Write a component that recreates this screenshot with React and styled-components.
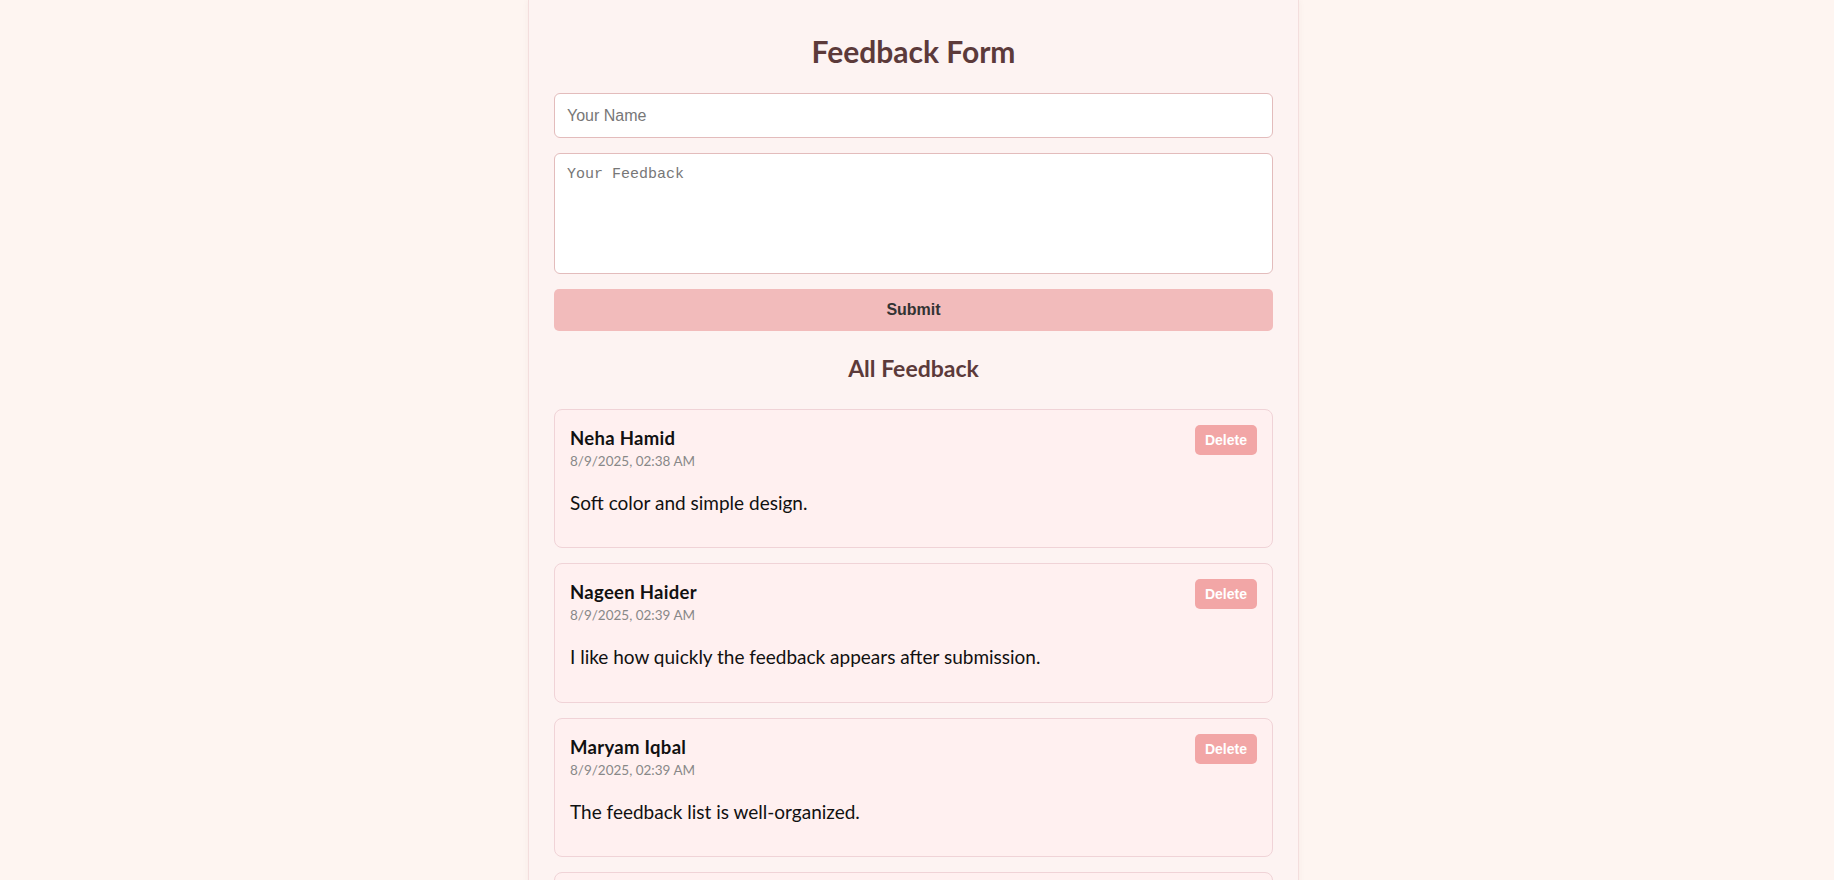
import React, { useState } from "react";
import styled, { createGlobalStyle } from "styled-components";

const GlobalStyle = createGlobalStyle`
  body {
    margin: 0;
    padding-right: 7px;
    background: #fef5f1;
    font-family: "Segoe UI", Lato, "Noto Sans", sans-serif;
  }
  * { box-sizing: border-box; }
`;

const Page = styled.div`
  width: 771px;
  margin: 0 auto;
  min-height: 100vh;
  padding: 33px 25px 30px;
  background: #fdf3f2;
  border-left: 1px solid #f3dedd;
  border-right: 1px solid #f3dedd;
  box-shadow: 0 0 6px rgba(120, 60, 60, 0.06);
`;

const Title = styled.h2`
  margin: 0 0 24px;
  text-align: center;
  font-size: 30px;
  line-height: 36px;
  font-weight: 700;
  color: #5c3a3a;
`;

const Form = styled.form`
  display: flex;
  flex-direction: column;
  gap: 15px;
`;

const NameInput = styled.input`
  height: 45px;
  padding: 12px;
  font-family: "Liberation Sans", Arial, sans-serif;
  font-size: 16px;
  border: 1px solid #e3bcbc;
  border-radius: 6px;
  background: #fff;
  outline: none;
  &::placeholder { color: #777; }
`;

const FeedbackArea = styled.textarea`
  height: 121px;
  padding: 12px;
  font-family: "Liberation Mono", monospace;
  font-size: 15px;
  border: 1px solid #e3bcbc;
  border-radius: 6px;
  background: #fff;
  resize: none;
  outline: none;
  &::placeholder { color: #777; }
`;

const SubmitButton = styled.button`
  height: 42px;
  border: none;
  border-radius: 5px;
  background: #f2bbbb;
  color: #333;
  font-family: "Liberation Sans", Arial, sans-serif;
  font-size: 16px;
  font-weight: 700;
  cursor: pointer;
`;

const ListTitle = styled.h3`
  margin: 24px 0 26px;
  text-align: center;
  font-size: 23px;
  line-height: 27.6px;
  font-weight: 700;
  color: #5c3a3a;
`;

const List = styled.div`
  display: flex;
  flex-direction: column;
  gap: 15px;
`;

const Card = styled.div`
  padding: 15px;
  background: #fff0f0;
  border: 1px solid #f0d3d7;
  border-radius: 8px;
`;

const CardHead = styled.div`
  display: flex;
  justify-content: space-between;
  align-items: flex-start;
`;

const Author = styled.div`
  font-size: 18.5px;
  line-height: 26px;
  letter-spacing: 0.3px;
  font-weight: 700;
  color: #111;
`;

const Stamp = styled.div`
  margin-top: 2px;
  font-size: 13.5px;
  line-height: 16px;
  color: #888;
`;

const DeleteButton = styled.button`
  padding: 7px 10px;
  border: none;
  border-radius: 5px;
  background: #f2a6a6;
  color: #fff;
  font-family: "Liberation Sans", Arial, sans-serif;
  font-size: 14px;
  font-weight: 700;
  line-height: 16px;
  cursor: pointer;
`;

const Message = styled.p`
  margin: 20px 0 15px;
  font-size: 19px;
  line-height: 28.5px;
  color: #111;
`;

const initial = [
  { id: 1, name: "Neha Hamid", date: "8/9/2025, 02:38 AM", text: "Soft color and simple design." },
  { id: 2, name: "Nageen Haider", date: "8/9/2025, 02:39 AM", text: "I like how quickly the feedback appears after submission." },
  { id: 3, name: "Maryam Iqbal", date: "8/9/2025, 02:39 AM", text: "The feedback list is well-organized." },
  { id: 4, name: "Ayesha Khan", date: "8/9/2025, 02:40 AM", text: "Easy to use and looks nice." },
];

const App = () => {
  const [items, setItems] = useState(initial);

  return (
    <>
      <GlobalStyle />
      <Page>
        <Title>Feedback Form</Title>
        <Form onSubmit={(e) => e.preventDefault()}>
          <NameInput placeholder="Your Name" />
          <FeedbackArea placeholder="Your Feedback" />
          <SubmitButton type="submit">Submit</SubmitButton>
        </Form>
        <ListTitle>All Feedback</ListTitle>
        <List>
          {items.map((f) => (
            <Card key={f.id}>
              <CardHead>
                <div>
                  <Author>{f.name}</Author>
                  <Stamp>{f.date}</Stamp>
                </div>
                <DeleteButton onClick={() => setItems(items.filter((i) => i.id !== f.id))}>
                  Delete
                </DeleteButton>
              </CardHead>
              <Message>{f.text}</Message>
            </Card>
          ))}
        </List>
      </Page>
    </>
  );
};

export default App;
